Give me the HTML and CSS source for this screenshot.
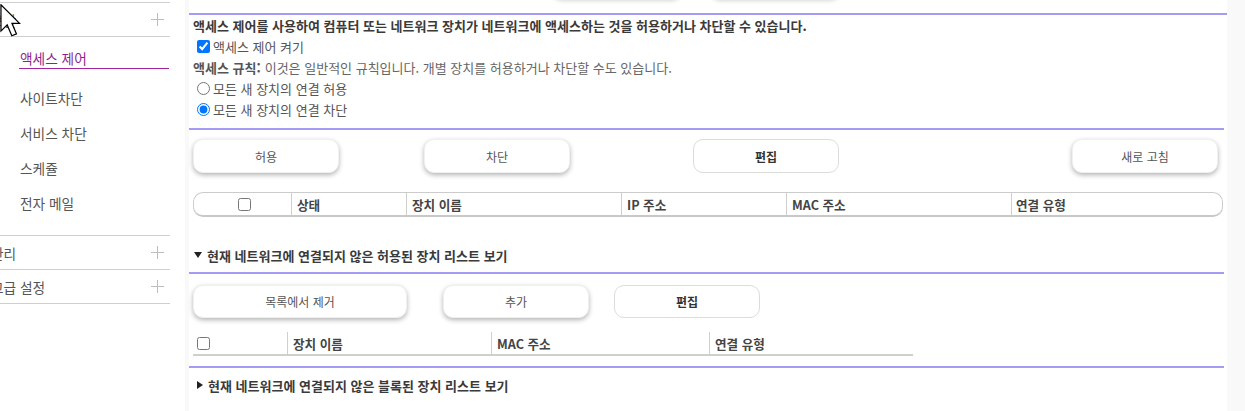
FILE: index.html
```html
<!DOCTYPE html>
<html lang="ko">
<head>
<meta charset="utf-8">
<title>액세스 제어</title>
<link rel="stylesheet" href="styles.css">
</head>
<body>
<div class="page">
  <aside class="sidebar">
    <div class="section">
      <div class="menu-head"><span class="menu-label">보안</span><svg class="plus" width="13" height="13" viewBox="0 0 13 13"><path d="M6.5 0V13M0 6.5H13" stroke="#bdbdbd" stroke-width="1" fill="none"/></svg></div>
      <nav class="submenu">
        <a class="sub active">액세스 제어</a>
        <a class="sub">사이트차단</a>
        <a class="sub">서비스 차단</a>
        <a class="sub">스케쥴</a>
        <a class="sub">전자 메일</a>
      </nav>
    </div>
    <div class="section">
      <div class="menu-head"><span class="menu-label">관리</span><svg class="plus" width="13" height="13" viewBox="0 0 13 13"><path d="M6.5 0V13M0 6.5H13" stroke="#bdbdbd" stroke-width="1" fill="none"/></svg></div>
    </div>
    <div class="section last">
      <div class="menu-head"><span class="menu-label">고급 설정</span><svg class="plus" width="13" height="13" viewBox="0 0 13 13"><path d="M6.5 0V13M0 6.5H13" stroke="#bdbdbd" stroke-width="1" fill="none"/></svg></div>
    </div>
  </aside>

  <main class="main">
    <div class="tabs"><span class="tab tab-a"></span><span class="tab tab-b"></span></div>
    <div class="rule"></div>

    <div class="intro">
      <div class="row lead">액세스 제어를 사용하여 컴퓨터 또는 네트워크 장치가 네트워크에 액세스하는 것을 허용하거나 차단할 수 있습니다.</div>
      <label class="row opt"><input type="checkbox" class="chk" checked>액세스 제어 켜기</label>
      <div class="row"><span class="label">액세스 규칙:</span> 이것은 일반적인 규칙입니다. 개별 장치를 허용하거나 차단할 수도 있습니다.</div>
      <label class="row opt"><input type="radio" name="rule" class="rad">모든 새 장치의 연결 허용</label>
      <label class="row opt"><input type="radio" name="rule" class="rad" checked>모든 새 장치의 연결 차단</label>
    </div>

    <div class="rule r2"></div>

    <div class="btn-row row1">
      <button class="btn">허용</button>
      <button class="btn b-block">차단</button>
      <button class="btn edit b-edit">편집</button>
      <button class="btn b-refresh">새로 고침</button>
    </div>

    <div class="table t1">
      <div class="cell c-chk"><input type="checkbox" class="chk"></div>
      <div class="cell c-status">상태</div>
      <div class="cell c-name">장치 이름</div>
      <div class="cell c-ip">IP 주소</div>
      <div class="cell c-mac">MAC 주소</div>
      <div class="cell c-type">연결 유형</div>
    </div>

    <div class="toggle tg1"><span class="tri-down"></span>현재 네트워크에 연결되지 않은 허용된 장치 리스트 보기</div>

    <div class="rule r3"></div>

    <div class="btn-row row2">
      <button class="btn b-remove">목록에서 제거</button>
      <button class="btn b-add">추가</button>
      <button class="btn edit b-edit2">편집</button>
    </div>

    <div class="table t2">
      <div class="cell d-chk"><input type="checkbox" class="chk"></div>
      <div class="cell d-name">장치 이름</div>
      <div class="cell d-mac">MAC 주소</div>
      <div class="cell d-type">연결 유형</div>
    </div>

    <div class="rule r4"></div>

    <div class="toggle tg2"><span class="tri-right"></span>현재 네트워크에 연결되지 않은 블록된 장치 리스트 보기</div>
  </main>
</div>

<svg class="cursor" width="21" height="33" viewBox="0 0 13.3 21.3"><path d="M0.5 0.5L0.5 17.5L4.5 13.5L7.5 20.5L10.5 19.3L7.6 12.5L12.5 12.5Z" fill="#fff" stroke="#000" stroke-width="0.8" stroke-linejoin="miter"/></svg>
</body>
</html>
```

FILE: styles.css
```css
* { box-sizing: border-box; }

html, body {
  margin: 0;
  padding: 0;
}

body {
  background: #f9f9f9;
  font-family: "Noto Sans CJK KR", "Noto Sans", "Liberation Sans", sans-serif;
  font-size: 13px;
  color: #555;
  overflow: hidden;
  height: 411px;
}

.page {
  display: flex;
  align-items: stretch;
  height: 411px;
}

/* ---------- sidebar ---------- */
.sidebar {
  width: 185px;
  flex: none;
  background: #fff;
  padding: 2px 15px 0 0;
  overflow: hidden;
  font-size: 13.7px;
  color: #555;
}

.section {
  border-top: 1px solid #cfcfcf;
}

.section.last {
  border-bottom: 1px solid #cfcfcf;
}

.menu-head {
  height: 33px;
  display: flex;
  align-items: center;
  justify-content: space-between;
  white-space: nowrap;
}

.menu-label {
  margin-left: -9px;
  line-height: 20px;
}

.plus {
  margin-right: 6px;
  display: block;
}

.submenu {
  border-top: 1px solid #cfcfcf;
  padding: 11px 1px 22px 19px;
  display: flex;
  flex-direction: column;
  gap: 15px;
}

.sub {
  display: block;
  line-height: 20px;
  height: 20px;
  padding-left: 1px;
  color: #555;
  white-space: nowrap;
}

.sub.active {
  color: #8f1f8c;
  height: 21px;
  border-bottom: 1px solid #a3249f;
  margin-bottom: 4px;
}

/* ---------- main ---------- */
.main {
  margin-left: 4px;
  width: 1038px;
  flex: none;
  background: #fff;
}

.tabs {
  height: 13px;
  display: flex;
  align-items: flex-start;
}

.tab {
  display: block;
  width: 130px;
  height: 30px;
  margin-top: -31px;
  border-radius: 10px;
  background: #fff;
  box-shadow: 0 2px 4px rgba(0, 0, 0, 0.16);
}

.tab-a { margin-left: 363px; }
.tab-b { margin-left: 28px; }

.rule {
  height: 2px;
  background: #a39cf5;
}

.rule.r2 { margin-top: 8px; margin-right: 3px; }
.rule.r3 { margin-top: 7px; margin-right: 3px; }
.rule.r4 { margin-top: 10px; margin-right: 3px; }

.intro {
  padding-left: 4px;
}

.row {
  display: flex;
  align-items: center;
  height: 21px;
  white-space: nowrap;
  color: #666;
}

.row.lead {
  font-weight: 700;
  color: #3a3a3a;
}

.row.opt {
  color: #555;
}

.label {
  font-weight: 700;
  color: #555;
  margin-right: 4px;
}

.chk {
  width: 13px;
  height: 13px;
  margin: 0 3px 0 4px;
  flex: none;
}

.rad {
  width: 13px;
  height: 13px;
  margin: 0 3px 0 4px;
  flex: none;
}

/* ---------- buttons ---------- */
.btn-row {
  display: flex;
  padding-left: 4px;
  padding-right: 9px;
}

.btn-row.row1 { margin-top: 9px; }
.btn-row.row2 { margin-top: 11px; }

.btn {
  width: 146px;
  height: 34px;
  border: 1px solid #f0f0f0;
  border-radius: 10px;
  background: #fff;
  box-shadow: 0 2px 5px rgba(0, 0, 0, 0.3);
  font-family: inherit;
  font-size: 12px;
  color: #555;
  padding: 0;
  flex: none;
}

.btn.edit {
  box-shadow: none;
  border: 1px solid #dcdcdc;
  font-weight: 700;
  color: #333;
}

.b-block { margin-left: 85px; }
.b-edit { margin-left: 123px; }
.b-refresh { margin-left: auto; }

.row2 .btn { height: 33px; }
.b-remove { width: 214px; }
.b-add { margin-left: 36px; }
.b-edit2 { margin-left: 25px; }

/* ---------- tables ---------- */
.table {
  display: flex;
  font-size: 12.6px;
  font-weight: 700;
  color: #444;
  white-space: nowrap;
}

.table.t1 {
  margin: 19px 4px 0 4px;
  height: 25px;
  border: 1px solid #cccccc;
  border-bottom: 2px solid #c8c8c8;
  border-radius: 10px;
}

.table.t2 {
  margin: 14px 0 0 4px;
  width: 720px;
  height: 24px;
  border-bottom: 2px solid #cfcfcf;
}

.cell {
  display: flex;
  align-items: center;
  padding-left: 5px;
  border-left: 1px solid #cfcfcf;
}

.c-chk { width: 97px; border-left: 0; justify-content: center; padding-left: 0; }
.c-chk .chk { margin: 0 0 0 4px; }
.c-status { width: 115px; }
.c-name { width: 215px; }
.c-ip { width: 165px; }
.c-mac { width: 225px; }
.c-type { flex: 1; padding-left: 4px; }

.d-chk { width: 94px; border-left: 0; padding-left: 4px; }
.d-chk .chk { margin: 0; }
.d-name { width: 204px; }
.d-mac { width: 218px; }
.d-type { flex: 1; }

/* ---------- toggles ---------- */
.toggle {
  display: flex;
  align-items: center;
  height: 20px;
  padding-left: 5px;
  font-weight: 700;
  color: #3a3a3a;
  white-space: nowrap;
}

.toggle.tg1 { margin-top: 28px; }
.toggle.tg2 { margin-top: 7px; }

.tri-down {
  width: 0;
  height: 0;
  border-left: 4.5px solid transparent;
  border-right: 4.5px solid transparent;
  border-top: 6px solid #222;
  margin-right: 5px;
}

.tri-right {
  width: 0;
  height: 0;
  border-top: 4.5px solid transparent;
  border-bottom: 4.5px solid transparent;
  border-left: 6px solid #222;
  margin-left: 3px;
  margin-right: 5px;
}

/* ---------- cursor overlay ---------- */
.cursor {
  position: absolute;
  left: 0;
  top: 4px;
}
```
